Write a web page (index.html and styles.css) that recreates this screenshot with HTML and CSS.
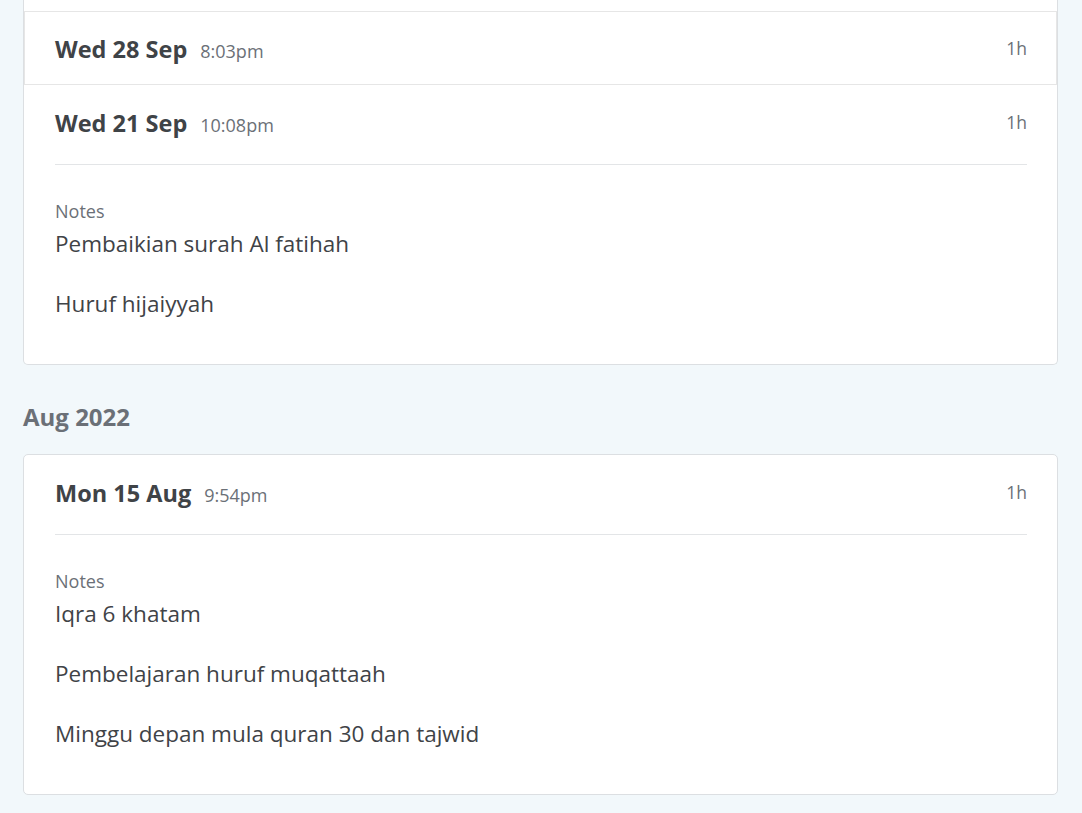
FILE: index.html
```html
<!DOCTYPE html>
<html>
<head>
<meta charset="utf-8">
<link rel="stylesheet" href="styles.css">
</head>
<body>
<main class="page">
  <section class="card card--clipped">
    <div class="row-prev"></div>
    <div class="lesson lesson--collapsed">
      <div class="lesson-head">
        <div class="lesson-when"><span class="lesson-date">Wed 28 Sep</span><span class="lesson-time">8:03pm</span></div>
        <span class="lesson-dur">1h</span>
      </div>
    </div>
    <div class="lesson">
      <div class="lesson-head lesson-head--open">
        <div class="lesson-when"><span class="lesson-date">Wed 21 Sep</span><span class="lesson-time">10:08pm</span></div>
        <span class="lesson-dur">1h</span>
      </div>
      <div class="notes">
        <div class="notes-label">Notes</div>
        <p>Pembaikian surah Al fatihah</p>
        <p>Huruf hijaiyyah</p>
      </div>
    </div>
  </section>

  <h2 class="month">Aug 2022</h2>

  <section class="card">
    <div class="lesson">
      <div class="lesson-head lesson-head--open">
        <div class="lesson-when"><span class="lesson-date">Mon 15 Aug</span><span class="lesson-time">9:54pm</span></div>
        <span class="lesson-dur">1h</span>
      </div>
      <div class="notes">
        <div class="notes-label">Notes</div>
        <p>Iqra 6 khatam</p>
        <p>Pembelajaran huruf muqattaah</p>
        <p>Minggu depan mula quran 30 dan tajwid</p>
      </div>
    </div>
  </section>
</main>
</body>
</html>
```

FILE: styles.css
```css
html, body {
  margin: 0;
  padding: 0;
  background: #f2f8fb;
  font-family: "Open Sans", "Noto Sans", sans-serif;
  color: #3f4347;
}

.page {
  padding: 0 24px 40px 23px;
}

.card {
  background: #fff;
  border: 1px solid #dcdfe2;
  border-radius: 5px;
}

.card--clipped {
  border-top: 0;
  border-top-left-radius: 0;
  border-top-right-radius: 0;
}

.row-prev {
  height: 11px;
}

.lesson {
  padding: 0 30px 0 31px;
}

.lesson--collapsed {
  border: 1px solid #e6e6e6;
  padding: 0 29px 0 30px;
}

.lesson-head {
  display: flex;
  justify-content: space-between;
  align-items: flex-start;
  height: 72px;
  box-sizing: border-box;
  padding-top: 22px;
}

.lesson-head--open {
  height: 80px;
  padding-top: 23px;
  border-bottom: 1px solid #e3e5e7;
}

.lesson-when {
  display: flex;
  align-items: baseline;
  gap: 13px;
}

.lesson-date {
  font-size: 23.5px;
  font-weight: 700;
  line-height: 30px;
  color: #3f4347;
}

.lesson-time {
  font-size: 18px;
  color: #6b7077;
}

.lesson-dur {
  font-size: 17.5px;
  line-height: 28px;
  color: #6b7077;
}

.notes {
  padding: 33px 0 15px;
}

.notes-label {
  font-size: 18px;
  line-height: 26px;
  color: #6b7077;
}

.notes p {
  margin: 5px 0 30px;
  font-size: 22.5px;
  line-height: 30px;
  color: #3f4347;
}

.notes p + p {
  margin-top: 0;
}

.month {
  margin: 0;
  padding: 37px 0 22px;
  font-size: 24px;
  line-height: 30px;
  font-weight: 700;
  color: #6b7077;
}
```
